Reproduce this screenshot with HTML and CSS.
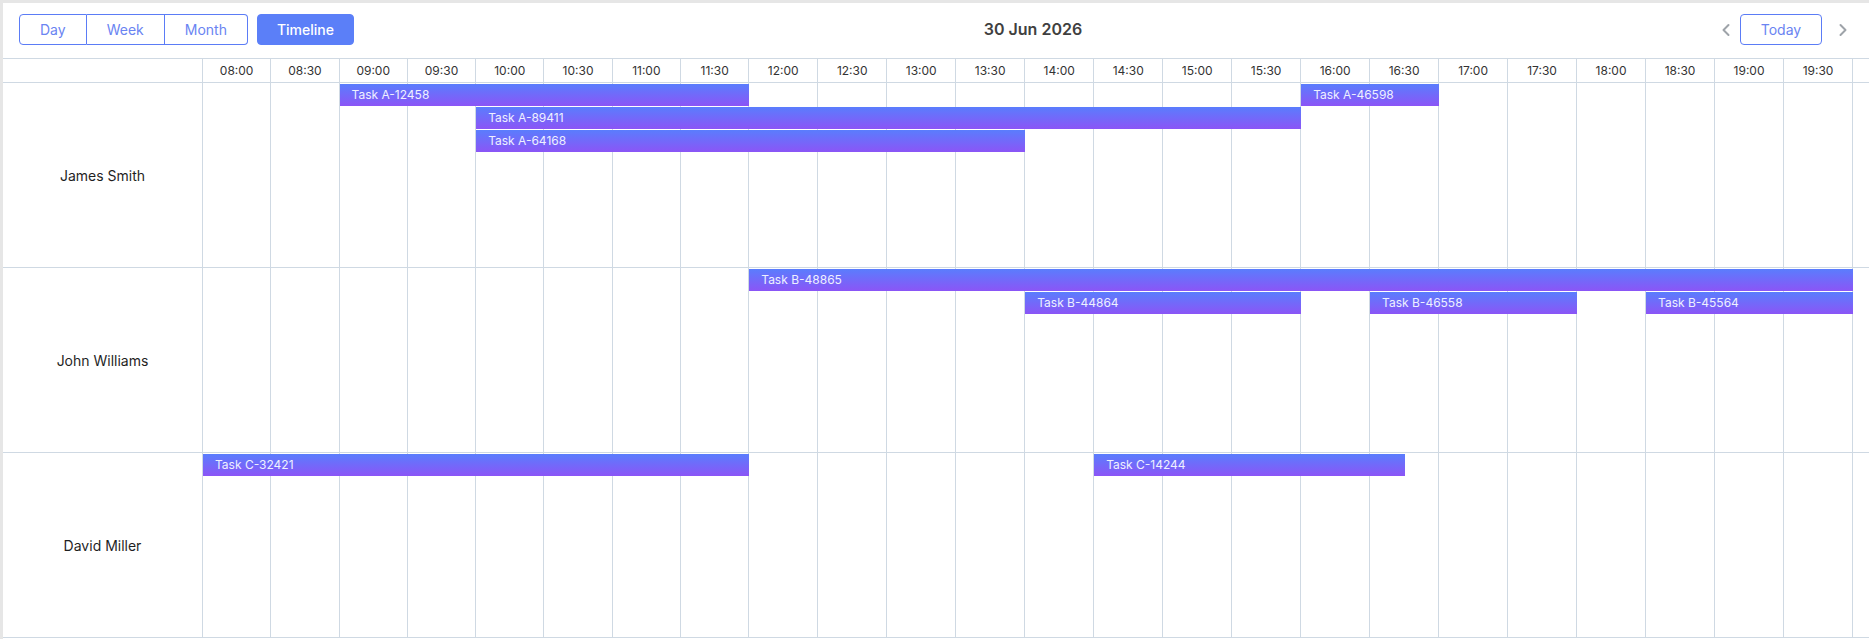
FILE: index.html
```html
<!DOCTYPE html>
<html lang="en">
<head>
<meta charset="utf-8">
<title>Timeline</title>
<link rel="stylesheet" href="styles.css">
</head>
<body>
<div class="app">
  <div class="toolbar">
    <div class="views">
      <div class="seg">
        <button class="seg-btn">Day</button>
        <button class="seg-btn">Week</button>
        <button class="seg-btn">Month</button>
      </div>
      <button class="primary-btn">Timeline</button>
    </div>
    <div class="title">30 Jun 2026</div>
    <div class="nav">
      <button class="arrow-btn" aria-label="Previous">
        <svg width="10" height="14" viewBox="0 0 10 14"><path d="M7.5 2 L2.5 7 L7.5 12" fill="none" stroke="#9ea3a9" stroke-width="2" stroke-linecap="round" stroke-linejoin="round"/></svg>
      </button>
      <button class="today-btn">Today</button>
      <button class="arrow-btn next" aria-label="Next">
        <svg width="10" height="14" viewBox="0 0 10 14"><path d="M2.5 2 L7.5 7 L2.5 12" fill="none" stroke="#9ea3a9" stroke-width="2" stroke-linecap="round" stroke-linejoin="round"/></svg>
      </button>
    </div>
  </div>

  <div class="scheduler">
    <div class="row header">
      <div class="res-cell"></div>
      <div class="cells">
        <div class="cell">08:00</div><div class="cell">08:30</div><div class="cell">09:00</div><div class="cell">09:30</div>
        <div class="cell">10:00</div><div class="cell">10:30</div><div class="cell">11:00</div><div class="cell">11:30</div>
        <div class="cell">12:00</div><div class="cell">12:30</div><div class="cell">13:00</div><div class="cell">13:30</div>
        <div class="cell">14:00</div><div class="cell">14:30</div><div class="cell">15:00</div><div class="cell">15:30</div>
        <div class="cell">16:00</div><div class="cell">16:30</div><div class="cell">17:00</div><div class="cell">17:30</div>
        <div class="cell">18:00</div><div class="cell">18:30</div><div class="cell">19:00</div><div class="cell">19:30</div>
      </div>
      <div class="gutter"></div>
    </div>

    <div class="row resource">
      <div class="res-cell name">James Smith</div>
      <div class="track">
        <div class="cells">
          <div class="cell"></div><div class="cell"></div><div class="cell"></div><div class="cell"></div>
          <div class="cell"></div><div class="cell"></div><div class="cell"></div><div class="cell"></div>
          <div class="cell"></div><div class="cell"></div><div class="cell"></div><div class="cell"></div>
          <div class="cell"></div><div class="cell"></div><div class="cell"></div><div class="cell"></div>
          <div class="cell"></div><div class="cell"></div><div class="cell"></div><div class="cell"></div>
          <div class="cell"></div><div class="cell"></div><div class="cell"></div><div class="cell"></div>
        </div>
        <div class="lanes">
          <div class="task" style="grid-column: 5 / 17; grid-row: 1;">Task A-12458</div>
          <div class="task" style="grid-column: 33 / 37; grid-row: 1;">Task A-46598</div>
          <div class="task" style="grid-column: 9 / 33; grid-row: 2;">Task A-89411</div>
          <div class="task" style="grid-column: 9 / 25; grid-row: 3;">Task A-64168</div>
        </div>
      </div>
      <div class="gutter"></div>
    </div>

    <div class="row resource">
      <div class="res-cell name">John Williams</div>
      <div class="track">
        <div class="cells">
          <div class="cell"></div><div class="cell"></div><div class="cell"></div><div class="cell"></div>
          <div class="cell"></div><div class="cell"></div><div class="cell"></div><div class="cell"></div>
          <div class="cell"></div><div class="cell"></div><div class="cell"></div><div class="cell"></div>
          <div class="cell"></div><div class="cell"></div><div class="cell"></div><div class="cell"></div>
          <div class="cell"></div><div class="cell"></div><div class="cell"></div><div class="cell"></div>
          <div class="cell"></div><div class="cell"></div><div class="cell"></div><div class="cell"></div>
        </div>
        <div class="lanes">
          <div class="task" style="grid-column: 17 / 49; grid-row: 1;">Task B-48865</div>
          <div class="task" style="grid-column: 25 / 33; grid-row: 2;">Task B-44864</div>
          <div class="task" style="grid-column: 35 / 41; grid-row: 2;">Task B-46558</div>
          <div class="task" style="grid-column: 43 / 49; grid-row: 2;">Task B-45564</div>
        </div>
      </div>
      <div class="gutter"></div>
    </div>

    <div class="row resource">
      <div class="res-cell name">David Miller</div>
      <div class="track">
        <div class="cells">
          <div class="cell"></div><div class="cell"></div><div class="cell"></div><div class="cell"></div>
          <div class="cell"></div><div class="cell"></div><div class="cell"></div><div class="cell"></div>
          <div class="cell"></div><div class="cell"></div><div class="cell"></div><div class="cell"></div>
          <div class="cell"></div><div class="cell"></div><div class="cell"></div><div class="cell"></div>
          <div class="cell"></div><div class="cell"></div><div class="cell"></div><div class="cell"></div>
          <div class="cell"></div><div class="cell"></div><div class="cell"></div><div class="cell"></div>
        </div>
        <div class="lanes">
          <div class="task" style="grid-column: 1 / 17; grid-row: 1;">Task C-32421</div>
          <div class="task" style="grid-column: 27 / 36; grid-row: 1;">Task C-14244</div>
        </div>
      </div>
      <div class="gutter"></div>
    </div>
  </div>
</div>
</body>
</html>
```

FILE: styles.css
```css
* { box-sizing: border-box; }

html, body {
  margin: 0;
  height: 100%;
  overflow: hidden;
}

body {
  background: #e6e6e6;
  padding: 3px 0 0 3px;
  font-family: Inter, "Noto Sans", "Liberation Sans", sans-serif;
  color: #333;
}

.app {
  background: #fff;
  width: 1866px;
  height: 100%;
}

.toolbar {
  height: 55px;
  display: flex;
  justify-content: space-between;
  align-items: flex-start;
  padding: 11px 12px 0 16px;
}

.views {
  display: flex;
  gap: 9px;
}

.seg {
  display: flex;
}

button {
  font-family: inherit;
  cursor: pointer;
}

.seg-btn {
  height: 31px;
  padding: 0 20px;
  font-size: 14px;
  color: #6a84f2;
  background: #fff;
  border: 1px solid #5b7cf6;
  border-left-width: 0;
  border-radius: 0;
}

.seg-btn:first-child {
  border-left-width: 1px;
  border-radius: 4px 0 0 4px;
}

.seg-btn:last-child {
  border-radius: 0 4px 4px 0;
}

.primary-btn {
  height: 31px;
  padding: 0 19px;
  font-size: 14px;
  font-weight: 500;
  color: #fff;
  background: #5b7ff8;
  border: 1px solid #5b7ff8;
  border-radius: 4px;
}

.title {
  font-size: 16px;
  font-weight: 600;
  color: #404040;
  line-height: 31px;
}

.nav {
  display: flex;
  align-items: center;
}

.arrow-btn {
  width: 28px;
  height: 31px;
  padding: 0;
  border: 0;
  background: transparent;
  display: flex;
  align-items: center;
  justify-content: center;
}

.arrow-btn.next {
  margin-left: 7px;
}

.today-btn {
  height: 31px;
  width: 82px;
  padding: 0;
  font-size: 14px;
  color: #6a84f2;
  background: #fff;
  border: 1px solid #5b7cf6;
  border-radius: 4px;
}

.scheduler {
  border-top: 1px solid #cfd9e3;
}

.row {
  display: grid;
  grid-template-columns: 200px 1650px 1fr;
  border-bottom: 1px solid #cfd9e3;
}

.header {
  height: 24px;
}

.resource {
  height: 185px;
}

.res-cell {
  border-right: 1px solid #cfd9e3;
}

.name {
  display: flex;
  align-items: center;
  justify-content: center;
  font-size: 14px;
  font-weight: 400;
  color: #1f1f1f;
}

/* the first eight half-hour columns render slightly narrower than the rest */
.cells {
  display: grid;
  grid-template-columns: repeat(8, 68.3fr) repeat(16, 69fr);
  height: 100%;
}

.cell {
  min-width: 0;
  border-right: 1px solid #cfd9e3;
}

.header .cell {
  display: flex;
  align-items: center;
  justify-content: center;
  font-size: 12px;
  color: #333;
}

.track {
  display: grid;
  height: 100%;
}

.track > .cells,
.track > .lanes {
  grid-area: 1 / 1;
}

.lanes {
  display: grid;
  grid-template-columns: repeat(16, 34.15fr) repeat(32, 34.5fr);
  grid-auto-rows: 22px;
  row-gap: 1px;
  align-content: start;
  padding-top: 1px;
}

.task {
  height: 22px;
  background: linear-gradient(to bottom, #5a7dfd, #8b55f6);
  color: #eef0ff;
  font-size: 12px;
  line-height: 22px;
  padding-left: 12px;
  white-space: nowrap;
  overflow: hidden;
}
```
